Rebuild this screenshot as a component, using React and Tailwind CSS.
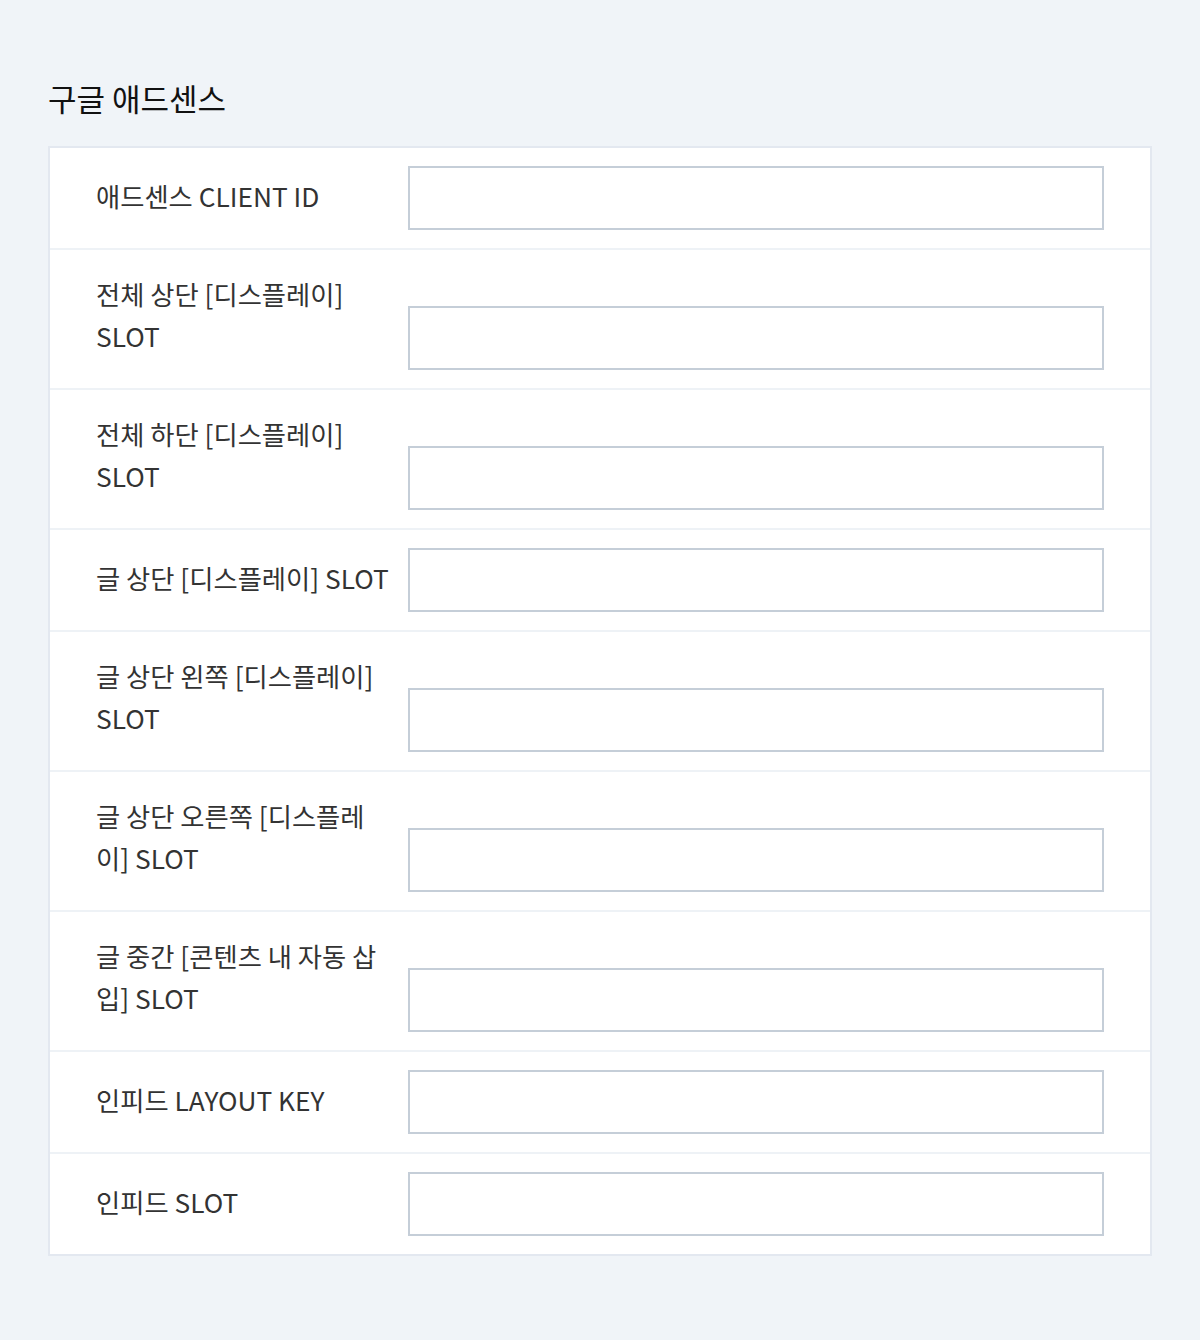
import React from "react";

const fields = [
  "애드센스 CLIENT ID",
  "전체 상단 [디스플레이] SLOT",
  "전체 하단 [디스플레이] SLOT",
  "글 상단 [디스플레이] SLOT",
  "글 상단 왼쪽 [디스플레이] SLOT",
  "글 상단 오른쪽 [디스플레이] SLOT",
  "글 중간 [콘텐츠 내 자동 삽입] SLOT",
  "인피드 LAYOUT KEY",
  "인피드 SLOT",
];

// allow line breaks between hangul syllables
const breakable = (text) =>
  text.replace(/([\uAC00-\uD7A3])(?=[\uAC00-\uD7A3])/g, "$1\u200B");

const App = () => {
  return (
    <div
      className="min-h-[1340px] bg-[#f0f4f8] px-12 pt-[76px]"
      style={{ fontFamily: '"Noto Sans CJK KR", "Noto Sans", sans-serif' }}
    >
      <h2 className="text-[31px] leading-[44px] text-[#111] mb-[26px]">구글 애드센스</h2>
      <div className="bg-white border-2 border-[#e3e8f0]">
        {fields.map((label, i) => (
          <div
            key={label}
            className={
              "flex items-end px-[46px] py-[18px] " +
              (i < fields.length - 1 ? "border-b-2 border-[#eef2f6]" : "")
            }
          >
            <div className="w-[312px] shrink-0 pr-[14px] pt-[5px] mb-[13px] text-[26.3px] leading-[42px] text-[#333]">
              {breakable(label)}
            </div>
            <input
              type="text"
              className="flex-1 h-[64px] border-2 border-[#c5ced8] bg-white px-3 outline-none"
            />
          </div>
        ))}
      </div>
    </div>
  );
};

export default App;
